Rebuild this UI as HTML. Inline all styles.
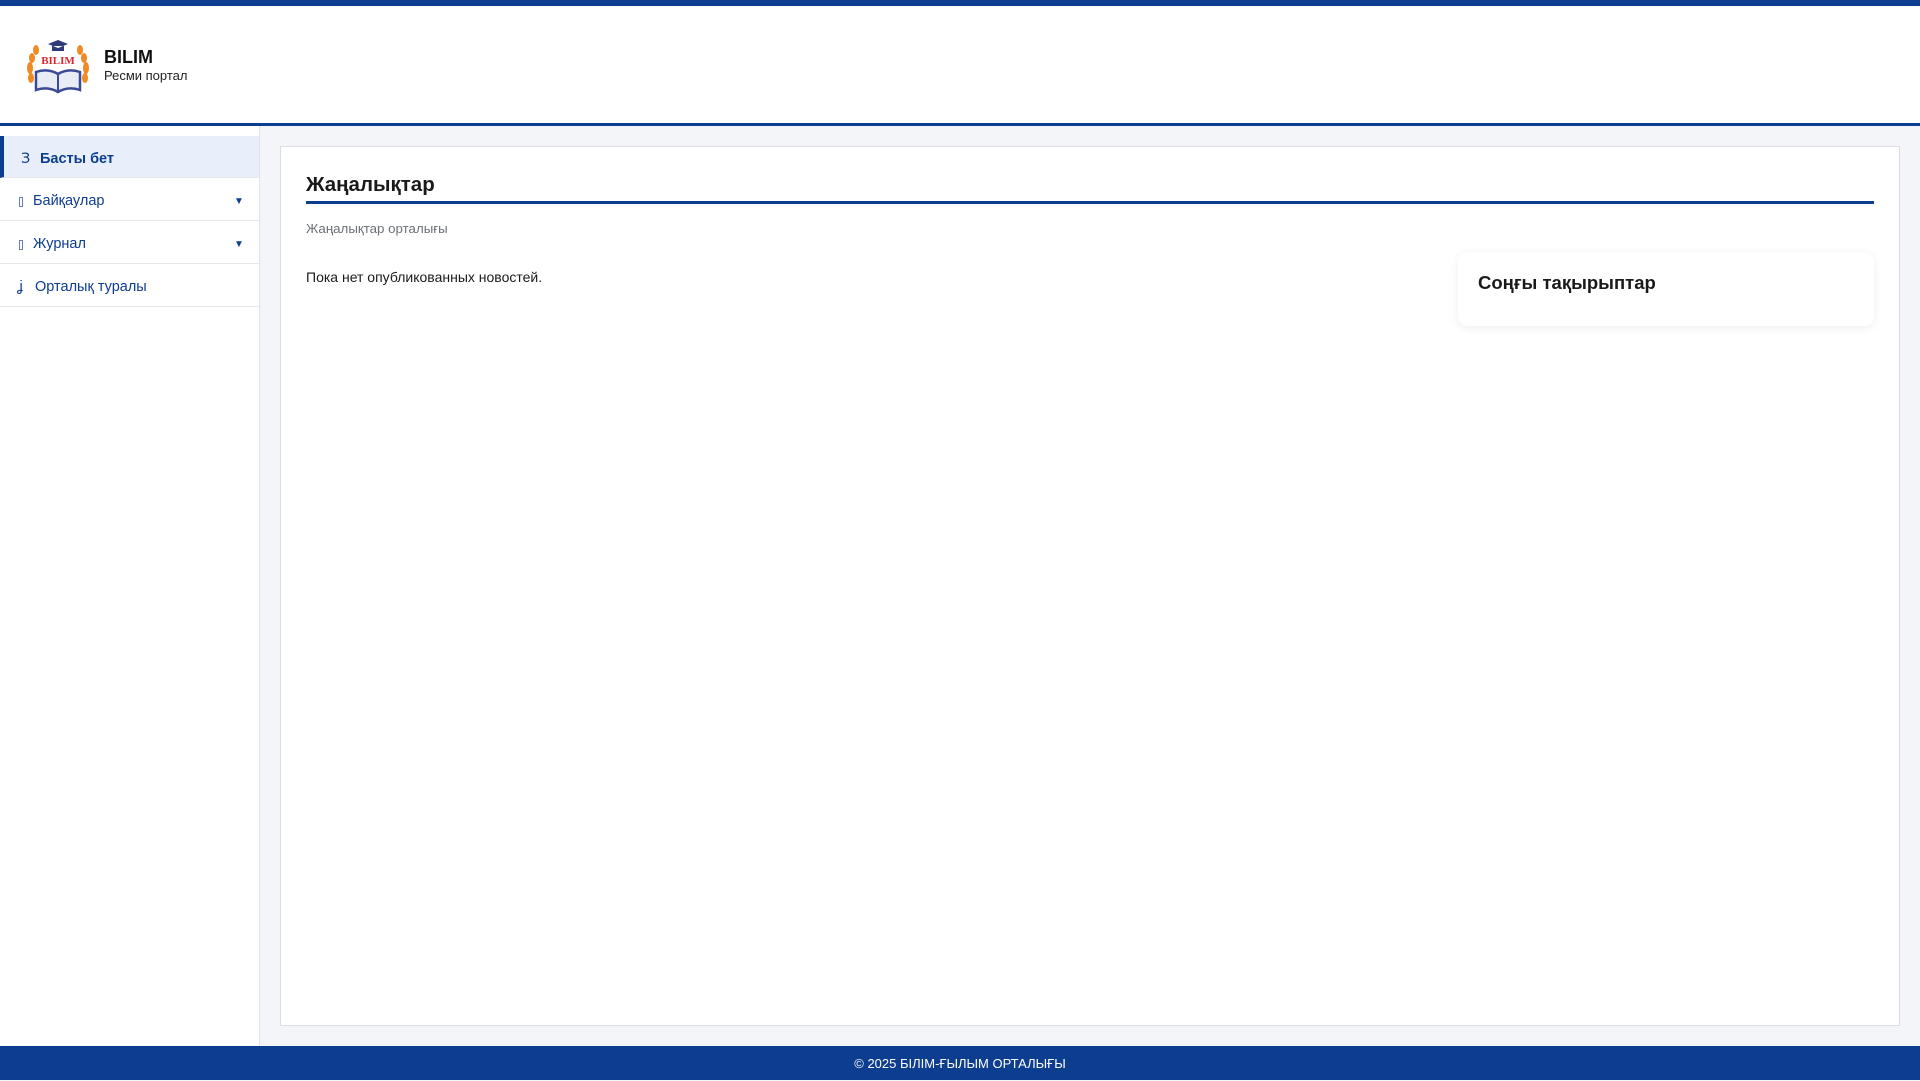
<!DOCTYPE html>
<html><head><meta charset="utf-8"><style>
*{box-sizing:border-box;margin:0;padding:0}
body{width:1920px;height:1080px;overflow:hidden;background:#f4f5f9;font-family:"Liberation Sans",sans-serif;position:relative}
.top{position:absolute;left:0;top:0;width:1920px;height:6px;background:#0d3d8f}
.hdr{position:absolute;left:0;top:6px;width:1920px;height:120px;background:#fff;border-bottom:3px solid #0d3d8f}
.brand{position:absolute;left:104px;top:41px;font-size:18px;font-weight:bold;color:#111}
.sub{position:absolute;left:104px;top:62px;font-size:13px;color:#222}
.side{position:absolute;left:0;top:126px;width:260px;height:920px;background:#fff;border-right:1px solid #e1e3ea}
.item{position:absolute;left:0;width:259px;height:43px;border-bottom:1px solid #e6e8ee;color:#0d3d8f;font-size:14.5px}
.item span{position:absolute;top:15px}
.ic{position:absolute;left:19px;top:19px;width:4px;height:10px;border:1px solid #6a7fb5}
.item span.arr{left:234px;top:18px;font-size:10px}
.card{position:absolute;left:280px;top:146px;width:1620px;height:880px;background:#fff;border:1px solid #dcdde2}
.h1{position:absolute;left:306px;top:173px;font-size:20.5px;font-weight:bold;color:#1a1a1a}
.ul{position:absolute;left:306px;top:201px;width:1568px;height:3px;background:#0d3d8f}
.s2{position:absolute;left:306px;top:221px;font-size:13.3px;color:#6b7079}
.p{position:absolute;left:306px;top:269px;font-size:14px;color:#1a1a1a}
.box{position:absolute;left:1458px;top:252px;width:416px;height:74px;background:#fff;border-radius:10px;box-shadow:0 2px 10px rgba(0,0,0,.07)}
.box b{position:absolute;left:20px;top:20px;font-size:18.5px;color:#1a1a1a}
.foot{position:absolute;left:0;top:1046px;width:1920px;height:34px;background:#0d3d8f;color:#fff;font-size:13px;text-align:center;line-height:35px}
</style></head><body>
<div class="top"></div>
<div class="hdr">
<svg style="position:absolute;left:24px;top:32px" width="68" height="58" viewBox="0 0 68 58">
<g fill="#f08a24"><ellipse cx="6" cy="30" rx="3" ry="6"/><ellipse cx="8" cy="20" rx="3" ry="5"/><ellipse cx="7" cy="40" rx="3" ry="5"/><ellipse cx="12" cy="12" rx="3" ry="5"/><ellipse cx="62" cy="30" rx="3" ry="6"/><ellipse cx="60" cy="20" rx="3" ry="5"/><ellipse cx="61" cy="40" rx="3" ry="5"/><ellipse cx="56" cy="12" rx="3" ry="5"/></g>
<path d="M24 6 L34 2 L44 6 L34 10Z M28 8 v5 h12 v-5" fill="#2d3a7a"/>
<text x="34" y="26" font-size="11" font-weight="bold" fill="#d8262c" text-anchor="middle" font-family="Liberation Serif">BILIM</text>
<path d="M12 34 Q24 30 34 36 Q44 30 56 34 V52 Q44 48 34 54 Q24 48 12 52Z" fill="#e8ecf6" stroke="#3b4a96" stroke-width="2.5"/>
<path d="M34 36V54" stroke="#3b4a96" stroke-width="2"/>
</svg>
<div class="brand">BILIM</div><div class="sub">Ресми портал</div>
</div>
<div class="side">
<div class="item" style="top:10px;height:42px;background:#e8effa;border-left:4px solid #0d3d8f"><span style="left:17px;font-family:'DejaVu Sans'">З</span><span style="left:36px;font-weight:bold">Басты бет</span></div>
<div class="item" style="top:52px"><i class="ic"></i><span style="left:33px">Байқаулар</span><span class="arr">▼</span></div>
<div class="item" style="top:95px"><i class="ic"></i><span style="left:33px">Журнал</span><span class="arr">▼</span></div>
<div class="item" style="top:138px"><span style="left:17px">ʝ</span><span style="left:35px">Орталық туралы</span></div>
</div>
<div class="card"></div>
<div class="h1">Жаңалықтар</div><div class="ul"></div>
<div class="s2">Жаңалықтар орталығы</div>
<div class="p">Пока нет опубликованных новостей.</div>
<div class="box"><b>Соңғы тақырыптар</b></div>
<div class="foot">© 2025 БІЛІМ-ҒЫЛЫМ ОРТАЛЫҒЫ</div>
</body></html>
